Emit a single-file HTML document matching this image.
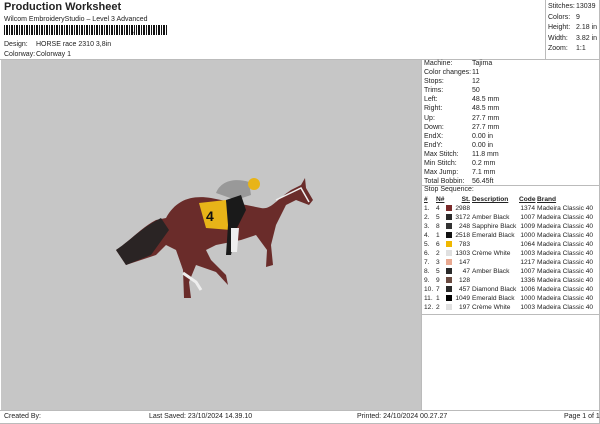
<!DOCTYPE html>
<html><head><meta charset="utf-8"><style>
body{margin:0;width:600px;height:424px;background:#fff;font-family:"Liberation Sans",sans-serif;color:#222;position:relative;overflow:hidden;font-size:7px}
.a{position:absolute;white-space:nowrap}
.t{font-size:11px;font-weight:bold;left:4px;top:1px}
.bc{position:absolute;left:4px;top:25px;height:10px;width:163px;background:repeating-linear-gradient(90deg,#111 0 1px,#fff 1px 2px,#111 2px 3px,#111 3px 4px,#fff 4px 5px)}
.canvas{position:absolute;left:1px;top:60px;width:420px;height:350px;background:#c6c6c6}
.line{position:absolute;background:#bbb}
.tbl{table-layout:fixed;border-collapse:collapse}
.tbl td{padding:0;height:9px;line-height:9px;font-size:6.6px;overflow:visible;white-space:nowrap}
.sw{display:inline-block;width:6px;height:6px;vertical-align:-1px;float:left;margin-top:1px}
.r{text-align:right}
</style></head><body>
<div class="a t">Production Worksheet</div>
<div class="a" style="left:4px;top:16px">Wilcom EmbroideryStudio – Level 3 Advanced</div>
<div class="bc"></div><div class="a" style="left:133px;top:28px;font-weight:bold">,</div>
<div class="bc" style="left:136px;width:28px;top:25px"></div>
<div class="a" style="left:4px;top:41px">Design:</div><div class="a" style="left:36px;top:41px">HORSE race 2310 3,8in</div>
<div class="a" style="left:4px;top:51px">Colorway:</div><div class="a" style="left:36px;top:51px">Colorway 1</div>
<div class="line" style="left:0;top:59px;width:600px;height:1px"></div>
<div class="line" style="left:545px;top:0;width:1px;height:60px"></div>
<div class="line" style="left:421px;top:60px;width:1px;height:350px"></div>
<div class="line" style="left:599px;top:0;width:1px;height:424px"></div>
<div class="a" style="left:548px;top:2px;line-height:10.5px">Stitches:<br>Colors:<br>Height:<br>Width:<br>Zoom:</div>
<div class="a" style="left:576px;top:2px;line-height:10.5px">13039<br>9<br>2.18 in<br>3.82 in<br>1:1</div>
<div class="canvas">
<svg width="420" height="350" style="position:absolute;left:0;top:0">
<path d="M115 190 C130 180 140 168 155 160 L165 158 C175 140 190 135 210 138 L260 148 C270 150 275 140 290 130 L300 125 L304 118 L305 128 L312 140 L308 145 L295 140 L285 145 L275 165 L270 185 L272 205 L265 207 L266 190 L255 175 L240 180 L215 185 L205 190 L210 200 L225 215 L227 225 L215 212 L195 205 L188 222 L190 238 L183 238 L182 210 L175 190 L165 185 L155 195 L140 200 L125 205 Z" fill="#6a2c2a"/>
<path d="M115 190 C130 180 140 168 160 158 L168 170 L150 195 L125 205 Z" fill="#2a2424"/>
<path d="M198 143 L225 140 L230 170 L205 168 Z" fill="#e8b418"/>
<text x="205" y="161" font-size="14" font-weight="bold" fill="#111" font-family="Liberation Sans">4</text>
<path d="M215 133 C220 120 235 118 248 122 L250 135 L235 140 Z" fill="#999"/>
<path d="M225 140 L240 135 L245 150 L235 170 L230 195 L225 195 L227 165 Z" fill="#1a1a1a"/>
<path d="M230 168 L238 168 L236 192 L230 192 Z" fill="#eee"/>
<circle cx="253" cy="124" r="6" fill="#e8b418"/>
<path d="M275 140 L300 128 L308 142" stroke="#eee" fill="none" stroke-width="1.5"/>
<path d="M182 213 L195 222 L200 230" stroke="#eee" stroke-width="3" fill="none"/>
</svg>
</div>
<div class="a" style="left:424px;top:59px;line-height:9.1px">Machine:<br>Color changes:<br>Stops:<br>Trims:<br>Left:<br>Right:<br>Up:<br>Down:<br>EndX:<br>EndY:<br>Max Stitch:<br>Min Stitch:<br>Max Jump:<br>Total Bobbin:</div>
<div class="a" style="left:472px;top:59px;line-height:9.1px">Tajima<br>11<br>12<br>50<br>48.5 mm<br>48.5 mm<br>27.7 mm<br>27.7 mm<br>0.00 in<br>0.00 in<br>11.8 mm<br>0.2 mm<br>7.1 mm<br>56.45ft</div>
<div class="line" style="left:422px;top:185px;width:178px;height:1px"></div>
<div class="a" style="left:424px;top:186px">Stop Sequence:</div>
<table class="tbl a" style="left:424px;top:195px;width:175px">
<colgroup><col style="width:12px"><col style="width:10px"><col style="width:24px"><col style="width:49px"><col style="width:16px"><col style="width:64px"></colgroup>
<tr style="font-weight:bold;text-decoration:underline"><td>#</td><td>N#</td><td class="r">St.</td><td style="padding-left:2px">Description</td><td class="r">Code</td><td style="padding-left:2px">Brand</td></tr>
<tr><td>1.</td><td>4</td><td class="r"><span class="sw" style="background:#7a2a2a"></span>2988</td><td style="padding-left:2px"></td><td class="r">1374</td><td style="padding-left:2px">Madeira Classic 40</td></tr>
<tr><td>2.</td><td>5</td><td class="r"><span class="sw" style="background:#2a2a2a"></span>3172</td><td style="padding-left:2px">Amber Black</td><td class="r">1007</td><td style="padding-left:2px">Madeira Classic 40</td></tr>
<tr><td>3.</td><td>8</td><td class="r"><span class="sw" style="background:#333"></span>248</td><td style="padding-left:2px">Sapphire Black</td><td class="r">1009</td><td style="padding-left:2px">Madeira Classic 40</td></tr>
<tr><td>4.</td><td>1</td><td class="r"><span class="sw" style="background:#111"></span>2518</td><td style="padding-left:2px">Emerald Black</td><td class="r">1000</td><td style="padding-left:2px">Madeira Classic 40</td></tr>
<tr><td>5.</td><td>6</td><td class="r"><span class="sw" style="background:#f0b800"></span>783</td><td style="padding-left:2px"></td><td class="r">1064</td><td style="padding-left:2px">Madeira Classic 40</td></tr>
<tr><td>6.</td><td>2</td><td class="r"><span class="sw" style="background:#e0e0e0"></span>1303</td><td style="padding-left:2px">Crème White</td><td class="r">1003</td><td style="padding-left:2px">Madeira Classic 40</td></tr>
<tr><td>7.</td><td>3</td><td class="r"><span class="sw" style="background:#e8a890"></span>147</td><td style="padding-left:2px"></td><td class="r">1217</td><td style="padding-left:2px">Madeira Classic 40</td></tr>
<tr><td>8.</td><td>5</td><td class="r"><span class="sw" style="background:#2a2a2a"></span>47</td><td style="padding-left:2px">Amber Black</td><td class="r">1007</td><td style="padding-left:2px">Madeira Classic 40</td></tr>
<tr><td>9.</td><td>9</td><td class="r"><span class="sw" style="background:#6a4a40"></span>128</td><td style="padding-left:2px"></td><td class="r">1336</td><td style="padding-left:2px">Madeira Classic 40</td></tr>
<tr><td>10.</td><td>7</td><td class="r"><span class="sw" style="background:#2a2a2a"></span>457</td><td style="padding-left:2px">Diamond Black</td><td class="r">1006</td><td style="padding-left:2px">Madeira Classic 40</td></tr>
<tr><td>11.</td><td>1</td><td class="r"><span class="sw" style="background:#000"></span>1049</td><td style="padding-left:2px">Emerald Black</td><td class="r">1000</td><td style="padding-left:2px">Madeira Classic 40</td></tr>
<tr><td>12.</td><td>2</td><td class="r"><span class="sw" style="background:#e0e0e0"></span>197</td><td style="padding-left:2px">Crème White</td><td class="r">1003</td><td style="padding-left:2px">Madeira Classic 40</td></tr>
</table>
<div class="line" style="left:422px;top:314px;width:178px;height:1px"></div>
<div class="line" style="left:0;top:410px;width:600px;height:1px"></div>
<div class="line" style="left:0;top:423px;width:600px;height:1px"></div>
<div class="a" style="left:4px;top:413px">Created By:</div>
<div class="a" style="left:149px;top:413px">Last Saved: 23/10/2024 14.39.10</div>
<div class="a" style="left:357px;top:413px">Printed: 24/10/2024 00.27.27</div>
<div class="a" style="left:564px;top:413px">Page 1 of 1</div>
</body></html>
